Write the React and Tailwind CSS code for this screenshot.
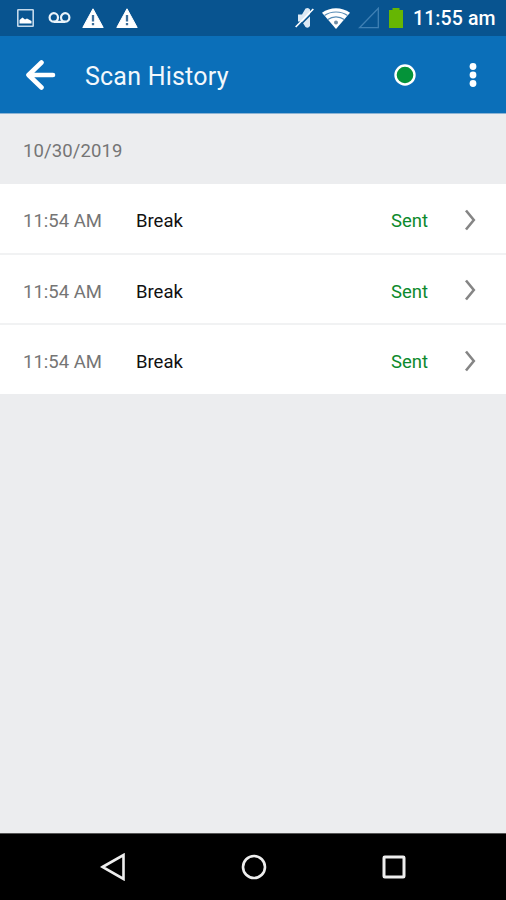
import React from 'react';

const scans = [
  { id: 1, time: '11:54 AM', type: 'Break', status: 'Sent' },
  { id: 2, time: '11:54 AM', type: 'Break', status: 'Sent' },
  { id: 3, time: '11:54 AM', type: 'Break', status: 'Sent' },
];

function WarningIcon({ className }) {
  return (
    <svg viewBox="0 0 22 20" className={`w-[22px] h-5 ${className}`}>
      <path d="M11 0.8L21.2 19.500H0.8z" fill="#fff" stroke="#fff" strokeWidth="1" strokeLinejoin="round" />
      <path d="M11 7v6.500M11 15v2.300" stroke="#3d6f9b" strokeWidth="2.300" />
    </svg>
  );
}

function StatusBar() {
  return (
    <div className="h-9 shrink-0 bg-[#085490] flex items-center pl-[17px] pr-[10px] text-white">
      {/* Notifications */}
      <svg viewBox="0 0 17 18" className="w-[17px] h-[18px] shrink-0">
        <rect x="0.8" y="0.8" width="15.400" height="16.400" rx="0.500" fill="none" stroke="#c3d9eb" strokeWidth="1.600" />
        <path d="M2.500 14.500v-3.500l3-2.500 2.500 2 2-1 4.500 2.500v2.500z" fill="#fff" />
      </svg>
      <svg viewBox="0 0 23 12" className="w-[23px] h-3 ml-[14px] shrink-0">
        <g fill="none" stroke="#eaf3fa" strokeWidth="2.200">
          <circle cx="5.800" cy="5.400" r="4.200" />
          <circle cx="17.200" cy="5.400" r="4.200" />
          <path d="M5.800 9.900h11.400" />
        </g>
      </svg>
      <WarningIcon className="ml-[11px] shrink-0" />
      <WarningIcon className="ml-3 shrink-0" />

      {/* System icons */}
      <div className="flex items-center ml-auto">
        <svg viewBox="0 0 19 22" className="w-[19px] h-[22px] shrink-0">
          <path d="M3 7.500h4L10.500 1.500q3-1.500 4.500 1v16.500q-2 3-4.500 1L7 14.500H3z" fill="#dce9f4" />
          <path d="M1.800 21.500L19 4" stroke="#085490" strokeWidth="1.600" />
          <path d="M0.700 20L18.300 2" stroke="#fff" strokeWidth="1.700" />
        </svg>
        <svg viewBox="0 0 28 21" className="w-7 h-[21px] ml-2 shrink-0">
          <path d="M14 21L0 4.800C8 -1.400 20 -1.400 28 4.800z" fill="#fff" />
          <g fill="none" stroke="#568bb5" strokeWidth="1.200">
            <path d="M2.500 7.600c6.500-4.800 16.500-4.800 23 0" />
            <path d="M5.800 11.500c4.800-3.600 11.600-3.600 16.400 0" />
          </g>
          <circle cx="14" cy="14.500" r="2" fill="#6f8ca4" />
        </svg>
        <svg viewBox="0 0 22 22" className="w-[22px] h-[22px] ml-2 shrink-0">
          <path d="M1.500 20.700L20.300 1.300v19.400z" fill="none" stroke="#3f80b4" strokeWidth="1.300" />
        </svg>
        <svg viewBox="0 0 14 20" className="w-[14px] h-5 ml-[9px] shrink-0">
          <path d="M3.500 0h7v2H14v18H0V2h3.500z" fill="#66b603" />
        </svg>
        <span className="ml-[10px] w-[83px] text-[19.500px] leading-6 font-medium whitespace-nowrap tracking-[0.1px] pt-px">11:55 am</span>
      </div>
    </div>
  );
}

function Header() {
  return (
    <div className="h-[78px] shrink-0 bg-[#0b6fb9] border-b border-[#8db4d4] flex items-center pl-[26px] pr-[29px]">
      <svg viewBox="0 0 30 32" className="w-[30px] h-8 shrink-0">
        <path d="M15.500 3.500L2.500 16l13 12.500M3 16h24" fill="none" stroke="#fff" strokeWidth="4.600" strokeLinejoin="round" strokeLinecap="round" />
      </svg>
      <h1 className="ml-[29px] text-[25px] leading-8 text-[#f3f8fc] whitespace-nowrap pt-1 tracking-[0.22px]">Scan History</h1>
      <svg viewBox="0 0 22 22" className="w-[22px] h-[22px] ml-auto shrink-0">
        <circle cx="11" cy="11" r="9.500" fill="#049339" stroke="#fff" strokeWidth="2.400" />
      </svg>
      <svg viewBox="0 0 8 26" className="w-2 h-[26px] ml-[53px] shrink-0">
        <g fill="#fff">
          <circle cx="4" cy="4.500" r="3.400" />
          <circle cx="4" cy="13" r="3.400" />
          <circle cx="4" cy="21.500" r="3.400" />
        </g>
      </svg>
    </div>
  );
}

function ScanRow({ scan }) {
  return (
    <div className="h-[70px] first:h-[71px] last:h-[69px] flex items-center bg-white border-b-2 border-[#f1f2f3] last:border-b-0 pt-[2px] pl-[23px] pr-[30px] text-[18.500px] leading-6">
      <span className="w-[113px] pt-[3px] text-[#757575]">{scan.time}</span>
      <span className="pt-[3px] text-[#111]">{scan.type}</span>
      <span className="ml-auto pt-[3px] text-[#0c8a2c]">{scan.status}</span>
      <svg viewBox="0 0 12 22" className="w-3 h-[22px] ml-[36px] shrink-0">
        <path d="M2 1.500L9.800 11 2 20.500" fill="none" stroke="#858585" strokeWidth="2.600" />
      </svg>
    </div>
  );
}

function NavBar() {
  return (
    <div className="h-[67px] shrink-0 bg-black border-t border-[#555] flex items-center pl-[100px] pr-[100px] justify-between">
      <svg viewBox="0 0 26 28" className="w-[26px] h-7">
        <path d="M2.500 14L23.500 2v24z" fill="none" stroke="#eee" strokeWidth="2.600" />
      </svg>
      <svg viewBox="0 0 26 26" className="w-[26px] h-[26px]">
        <circle cx="13" cy="13" r="11" fill="none" stroke="#eee" strokeWidth="2.600" />
      </svg>
      <svg viewBox="0 0 24 24" className="w-6 h-6">
        <rect x="2" y="2" width="20" height="20" rx="0.800" fill="none" stroke="#eee" strokeWidth="3" />
      </svg>
    </div>
  );
}

export default function App() {
  return (
    <div className="w-full h-screen flex flex-col bg-[#ecedef] overflow-hidden font-[Roboto,sans-serif]">
      <StatusBar />
      <Header />
      <main className="flex-1">
        <div className="h-[70px] flex items-center pl-[23px] pt-[4px] text-[18.500px] leading-6 tracking-[0.1px] text-[#757575]">
          10/30/2019
        </div>
        <div>
          {scans.map((scan) => (
            <ScanRow key={scan.id} scan={scan} />
          ))}
        </div>
      </main>
      <NavBar />
    </div>
  );
}
